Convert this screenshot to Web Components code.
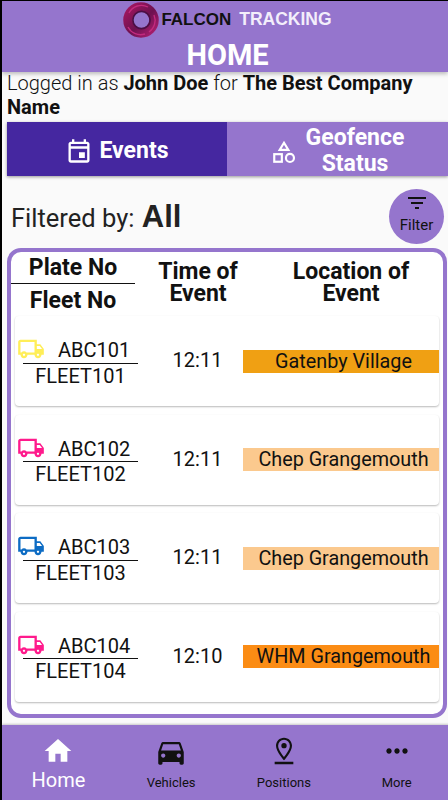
<!DOCTYPE html>
<html>
<head>
<meta charset="utf-8">
<title>Falcon Tracking</title>
<style>
  html, body { margin: 0; padding: 0; background: #000; }
  body { font-family: Roboto, sans-serif; color: #111; }
  login-info b { font-weight: 700; }
  #screen {
    width: 446px;
    height: 799px;
    margin: 1px 0 0 2px;
    background: #fafafa;
    display: flex;
    flex-direction: column;
    overflow: hidden;
  }
</style>
</head>
<body>
<div id="screen">
  <app-header title="HOME"></app-header>
  <login-info><span>Logged in as <b>John Doe</b> for <b>The Best Company Name</b></span></login-info>
  <tab-bar></tab-bar>
  <filter-row value="All"></filter-row>
  <event-list>
    <event-row plate="ABC101" fleet="FLEET101" time="12:11" location="Gatenby Village" truck="#ffee58" loc="#f0a013"></event-row>
    <event-row plate="ABC102" fleet="FLEET102" time="12:11" location="Chep Grangemouth" truck="#ff1a8c" loc="#fbc98e"></event-row>
    <event-row plate="ABC103" fleet="FLEET103" time="12:11" location="Chep Grangemouth" truck="#0d6cc4" loc="#fbc98e"></event-row>
    <event-row plate="ABC104" fleet="FLEET104" time="12:10" location="WHM Grangemouth" truck="#ff1a8c" loc="#fb8c14"></event-row>
  </event-list>
  <bottom-nav></bottom-nav>
</div>

<script>
const PURPLE = '#9575cd';

class AppHeader extends HTMLElement {
  connectedCallback() {
    this.attachShadow({ mode: 'open' });
    this.shadowRoot.innerHTML = `
      <style>
        :host {
          display: block;
          background: ${PURPLE};
          height: 71px;
          box-shadow: 0 2px 4px rgba(0,0,0,.25);
          position: relative;
          z-index: 2;
        }
        .logo {
          display: flex;
          align-items: center;
          justify-content: center;
          height: 37px;
          padding-left: 5px;
          font: bold 17.5px "Liberation Sans", sans-serif;
        }
        svg { width: 36px; height: 36px; margin-right: 2px; }
        .falcon { color: #111; font-size: 17px; }
        .tracking { color: #f3eefb; margin-left: 8px; }
        h1 {
          margin: 0;
          padding: 2px 0 0 5px;
          text-align: center;
          color: #fff;
          font: 700 29px/30px Roboto, sans-serif;
        }
      </style>
      <div class="logo">
        <svg viewBox="0 0 36 36">
          <defs>
            <linearGradient id="ring" x1="0" y1="0" x2="1" y2="1">
              <stop offset="0" stop-color="#a0165f"/>
              <stop offset=".55" stop-color="#6d1150"/>
              <stop offset="1" stop-color="#a81e6c"/>
            </linearGradient>
          </defs>
          <circle cx="18" cy="18" r="13" fill="none" stroke="url(#ring)" stroke-width="9.5"/>
          <path d="M6 11a14 14 0 0 1 19-6M31 13a14 14 0 0 1-5 17M22 32a14 14 0 0 1-17-7" fill="none" stroke="#c22a7e" stroke-width="1.4"/>
          <circle cx="18.5" cy="18" r="8.6" fill="none" stroke="#4a0f45" stroke-width="1.6"/>
        </svg>
        <span class="falcon">FALCON</span><span class="tracking">TRACKING</span>
      </div>
      <h1>${this.getAttribute('title')}</h1>
    `;
  }
}
customElements.define('app-header', AppHeader);

class LoginInfo extends HTMLElement {
  connectedCallback() {
    this.attachShadow({ mode: 'open' });
    this.shadowRoot.innerHTML = `
      <style>
        :host {
          display: block;
          margin-top: -1px;
          padding: 0 16px 0 5px;
          font: 300 20px/24px Roboto, sans-serif;
          color: #111;
        }
        ::slotted(span) { display: block; }
      </style>
      <slot></slot>
    `;
  }
}
customElements.define('login-info', LoginInfo);

class TabBar extends HTMLElement {
  connectedCallback() {
    this.attachShadow({ mode: 'open' });
    this.shadowRoot.innerHTML = `
      <style>
        :host {
          display: flex;
          height: 54px;
          margin: 3px 0 0 5px;
          box-shadow: 0 1px 3px rgba(0,0,0,.4);
          color: #fff;
          font: 700 23px/26px Roboto, sans-serif;
          position: relative;
        }
        .tab {
          display: flex;
          align-items: center;
          justify-content: center;
          text-align: center;
          padding-top: 3px;
          box-sizing: border-box;
        }
        .on { width: 220px; background: #4527a0; }
        .off { flex: 1; background: ${PURPLE}; padding-left: 7px; }
        .on svg { margin-right: 6px; }
        .off svg { margin-right: 2px; margin-top: 2px; }
        .off span { width: 112px; }
      </style>
      <div class="tab on">
        <svg width="28" height="28" viewBox="0 0 24 24" fill="#fff"><path d="M19 4h-1V2h-2v2H8V2H6v2H5c-1.1 0-2 .9-2 2v14c0 1.1.9 2 2 2h14c1.1 0 2-.9 2-2V6c0-1.1-.9-2-2-2zm0 16H5V10h14v10zm0-12H5V6h14v2zm-7 5h5v5h-5z"/></svg>
        <span>Events</span>
      </div>
      <div class="tab off">
        <svg width="26" height="26" viewBox="0 0 24 24" fill="none" stroke="#fff" stroke-width="2"><path d="M12 3.5 16 10H8z"/><rect x="3" y="14" width="7" height="7"/><circle cx="17.5" cy="17.5" r="3.7"/></svg>
        <span>Geofence Status</span>
      </div>
    `;
  }
}
customElements.define('tab-bar', TabBar);

class FilterRow extends HTMLElement {
  connectedCallback() {
    this.attachShadow({ mode: 'open' });
    this.shadowRoot.innerHTML = `
      <style>
        :host {
          display: flex;
          align-items: center;
          justify-content: space-between;
          box-sizing: border-box;
          height: 72px;
          padding: 8px 4px 0 9px;
        }
        .label { font: 400 25.5px Roboto, sans-serif; color: #222; margin-top: 2px; }
        .label b { font: 700 31px "Liberation Sans", sans-serif; margin-left: 1px; }
        .btn {
          width: 55px;
          height: 55px;
          border-radius: 50%;
          background: ${PURPLE};
          display: flex;
          flex-direction: column;
          align-items: center;
          font: 400 15px/16px Roboto, sans-serif;
          color: #111;
        }
        svg { display: block; margin-top: 2px; margin-bottom: 2px; }
      </style>
      <div class="label">Filtered by: <b>${this.getAttribute('value')}</b></div>
      <div class="btn">
        <svg width="24" height="24" viewBox="0 0 24 24" fill="#111"><path d="M10 18h4v-2h-4v2zM3 6v2h18V6H3zm3 7h12v-2H6v2z"/></svg>
        <span>Filter</span>
      </div>
    `;
  }
}
customElements.define('filter-row', FilterRow);

class EventList extends HTMLElement {
  connectedCallback() {
    this.attachShadow({ mode: 'open' });
    this.shadowRoot.innerHTML = `
      <style>
        :host {
          display: block;
          flex: 1;
          min-height: 0;
          margin: 0 1px 7px 5px;
          border: 4px solid ${PURPLE};
          border-radius: 14px;
          background: #fff;
          overflow: hidden;
          box-sizing: border-box;
        }
        .head {
          display: flex;
          height: 63px;
          font: 700 23px/22px Roboto, sans-serif;
          color: #111;
          text-align: center;
        }
        .plate { width: 124px; padding-top: 1px; }
        .plate div { height: 30px; line-height: 29px; }
        .plate div:first-child { border-bottom: 1px solid #111; margin-bottom: 2px; }
        .time { width: 100px; margin-left: 13px; padding-top: 9px; }
        .loc { width: 130px; margin-left: 38px; padding-top: 9px; }
        .rows {
          display: flex;
          flex-direction: column;
          gap: 8.5px;
          padding: 1px 4px 0 4px;
        }
      </style>
      <div class="head">
        <div class="plate"><div>Plate No</div><div>Fleet No</div></div>
        <div class="time">Time of Event</div>
        <div class="loc">Location of Event</div>
      </div>
      <div class="rows"><slot></slot></div>
    `;
  }
}
customElements.define('event-list', EventList);

class EventRow extends HTMLElement {
  connectedCallback() {
    const a = n => this.getAttribute(n);
    this.attachShadow({ mode: 'open' });
    this.shadowRoot.innerHTML = `
      <style>
        :host {
          display: flex;
          align-items: center;
          height: 90px;
          background: #fff;
          border-radius: 4px;
          box-shadow: 0 1px 2px rgba(0,0,0,.28);
          font: 400 20px/24px Roboto, sans-serif;
          color: #111;
          box-sizing: border-box;
          flex: none;
        }
        .ids { width: 115px; margin-left: 8px; text-align: center; }
        .top {
          display: flex;
          align-items: center;
          height: 28px;
          border-bottom: 1px solid #111;
          gap: 13px;
        }
        .top span { margin-top: 3px; }
        .top svg { margin-left: -6px; margin-top: 1px; flex: none; }
        .bot { height: 24px; line-height: 24px; }
        .time {
          width: 105px;
          padding-left: 14px;
          box-sizing: border-box;
          text-align: center;
          margin-top: -2px;
        }
        .loc {
          flex: 1;
          height: 23px;
          line-height: 23px;
          padding-left: 5px;
          font-size: 19.8px;
          text-align: center;
          background: ${a('loc')};
          white-space: nowrap;
        }
      </style>
      <div class="ids">
        <div class="top">
          <svg width="28" height="28" viewBox="0 0 24 24" fill="${a('truck')}"><path d="M20 8h-3V4H3c-1.1 0-2 .9-2 2v11h2c0 1.66 1.34 3 3 3s3-1.34 3-3h6c0 1.66 1.34 3 3 3s3-1.34 3-3h2v-5l-3-4zm-.5 1.5 1.96 2.5H17V9.5h2.5zM6 18c-.55 0-1-.45-1-1s.45-1 1-1 1 .45 1 1-.45 1-1 1zm2.22-3c-.55-.61-1.33-1-2.22-1s-1.67.39-2.22 1H3V6h12v9H8.22zM18 18c-.55 0-1-.45-1-1s.45-1 1-1 1 .45 1 1-.45 1-1 1z"/></svg>
          <span>${a('plate')}</span>
        </div>
        <div class="bot">${a('fleet')}</div>
      </div>
      <div class="time">${a('time')}</div>
      <div class="loc">${a('location')}</div>
    `;
  }
}
customElements.define('event-row', EventRow);

class NavItem extends HTMLElement {
  connectedCallback() {
    this.attachShadow({ mode: 'open' });
    const active = this.hasAttribute('active');
    this.shadowRoot.innerHTML = `
      <style>
        :host {
          flex: 1;
          display: flex;
          flex-direction: column;
          align-items: center;
          color: ${active ? '#fff' : '#111'};
          font: 400 ${active ? '20px' : '13px'}/1 Roboto, sans-serif;
        }
        .icon { height: 32px; margin-top: 10px; }
        span { margin-top: ${active ? '3px' : '9px'}; }
        ::slotted(svg) { display: block; }
      </style>
      <div class="icon"><slot></slot></div>
      <span>${this.getAttribute('label')}</span>
    `;
  }
}
customElements.define('nav-item', NavItem);

class BottomNav extends HTMLElement {
  connectedCallback() {
    this.attachShadow({ mode: 'open' });
    this.shadowRoot.innerHTML = `
      <style>
        :host {
          display: flex;
          flex: none;
          height: 75px;
          margin-right: -5px;
          background: ${PURPLE};
          box-shadow: 0 -1px 2px rgba(0,0,0,.2);
        }
        nav-item { flex: 1; }
      </style>
      <nav-item label="Home" active>
        <svg width="32" height="32" viewBox="0 0 24 24" fill="#fff"><path d="M10 20v-6h4v6h5v-8h3L12 3 2 12h3v8z"/></svg>
      </nav-item>
      <nav-item label="Vehicles">
        <svg width="34" height="34" viewBox="0 0 24 24" fill="#111"><path d="M18.92 6.01C18.72 5.42 18.16 5 17.5 5h-11c-.66 0-1.21.42-1.42 1.01L3 12v8c0 .55.45 1 1 1h1c.55 0 1-.45 1-1v-1h12v1c0 .55.45 1 1 1h1c.55 0 1-.45 1-1v-8l-2.08-5.99zM6.5 16c-.83 0-1.5-.67-1.5-1.5S5.67 13 6.5 13s1.5.67 1.5 1.5S7.33 16 6.5 16zm11 0c-.83 0-1.5-.67-1.5-1.5s.67-1.5 1.5-1.5 1.5.67 1.5 1.5-.67 1.5-1.5 1.5zM5 11l1.5-4.5h11L19 11H5z"/></svg>
      </nav-item>
      <nav-item label="Positions">
        <svg width="32" height="32" viewBox="0 0 24 24" fill="#111"><path d="M18 8c0-3.31-2.69-6-6-6S6 4.69 6 8c0 4.5 6 11 6 11s6-6.5 6-11zM5 20v2h14v-2H5z"/><path d="M12 3.6A4.4 4.4 0 0 0 7.6 8c0 2.7 2.9 6.6 4.4 8.5 1.5-1.9 4.4-5.8 4.4-8.5A4.4 4.4 0 0 0 12 3.6z" fill="${PURPLE}"/><circle cx="12" cy="8" r="2"/></svg>
      </nav-item>
      <nav-item label="More">
        <svg width="32" height="32" viewBox="0 0 24 24" fill="#111"><path d="M6 10c-1.1 0-2 .9-2 2s.9 2 2 2 2-.9 2-2-.9-2-2-2zm12 0c-1.1 0-2 .9-2 2s.9 2 2 2 2-.9 2-2-.9-2-2-2zm-6 0c-1.1 0-2 .9-2 2s.9 2 2 2 2-.9 2-2-.9-2-2-2z"/></svg>
      </nav-item>
    `;
  }
}
customElements.define('bottom-nav', BottomNav);
</script>
</body>
</html>
